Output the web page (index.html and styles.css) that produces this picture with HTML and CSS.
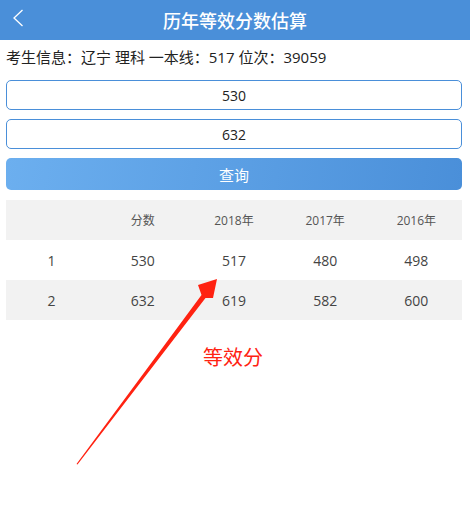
FILE: index.html
```html
<!DOCTYPE html>
<html lang="zh-CN">
<head>
  <meta charset="UTF-8">
  <title>历年等效分数估算</title>
  <meta name="viewport" content="width=device-width, initial-scale=1.0">
  <link rel="stylesheet" href="styles.css">
</head>
<body>

  <div class="header">
    <a class="back" href="#">
      <svg width="12" height="18" viewBox="0 0 12 18"><path d="M10.5 1 L2 9 L10.5 17" fill="none" stroke="#fff" stroke-width="1.3"/></svg>
    </a>
    <h1>历年等效分数估算</h1>
  </div>

  <div class="main">
    <p class="info">考生信息：辽宁 理科 一本线：517 位次：39059</p>

    <input type="text" class="score-input" value="530">
    <input type="text" class="score-input" value="632">
    <button class="query-btn">查询</button>

    <table class="result">
      <tr class="head">
        <th></th><th>分数</th><th>2018年</th><th>2017年</th><th>2016年</th>
      </tr>
      <tr>
        <td>1</td><td>530</td><td>517</td><td>480</td><td>498</td>
      </tr>
      <tr class="alt">
        <td>2</td><td>632</td><td>619</td><td>582</td><td>600</td>
      </tr>
    </table>
  </div>

  <!-- annotation -->
  <svg class="arrow" width="470" height="523" viewBox="0 0 470 523">
    <path d="M76.5 464 L201.5 295 L198 285 L217 279 L213 298 L205.5 298 L77.5 464.5 Z" fill="#ff2211"/>
  </svg>
  <div class="note">等效分</div>

</body>
</html>
```

FILE: styles.css
```css
:root {
  --blue: #4a8fd9;
  --gray-row: #f2f2f2;
}
* {
  margin: 0;
  padding: 0;
  box-sizing: border-box;
}
body {
  font-family: "Open Sans", "Noto Sans CJK SC", sans-serif;
  background: #fff;
  color: #222;
  position: relative;
  width: 470px;
  min-height: 523px;
}

.header {
  height: 40px;
  background: var(--blue);
  display: flex;
  align-items: center;
  justify-content: center;
  position: relative;
}
.header h1 {
  color: #fff;
  font-size: 18px;
  font-weight: 500;
}
.back {
  position: absolute;
  left: 12px;
  top: 9px;
}

.main {
  padding: 0 8px 0 6px;
}
.info {
  font-size: 15px;
  line-height: 20px;
  margin-top: 7px;
  margin-bottom: 13px;
  color: #222;
}

.score-input {
  display: block;
  width: 100%;
  height: 30px;
  border: 1px solid var(--blue);
  border-radius: 5px;
  text-align: center;
  font-family: inherit;
  font-size: 14px;
  color: #222;
  margin-bottom: 9px;
  outline: none;
}
.query-btn {
  display: block;
  width: 100%;
  height: 32px;
  margin-top: 2px;
  border: none;
  border-radius: 5px;
  background: linear-gradient(100deg, #6cafef, #4a8fd9);
  color: #fff;
  font-family: inherit;
  font-size: 15px;
}

.result {
  width: 100%;
  margin-top: 10px;
  border-collapse: collapse;
  table-layout: fixed;
  text-align: center;
}
.result th {
  height: 40px;
  font-size: 12px;
  font-weight: normal;
  color: #555;
  background: var(--gray-row);
}
.result td {
  height: 40px;
  font-size: 14px;
  color: #444;
}
.result tr.alt td {
  background: var(--gray-row);
}

.arrow {
  position: absolute;
  left: 0;
  top: 0;
  pointer-events: none;
}
.note {
  position: absolute;
  left: 203px;
  top: 342px;
  font-size: 20px;
  color: #ff2211;
}
```
